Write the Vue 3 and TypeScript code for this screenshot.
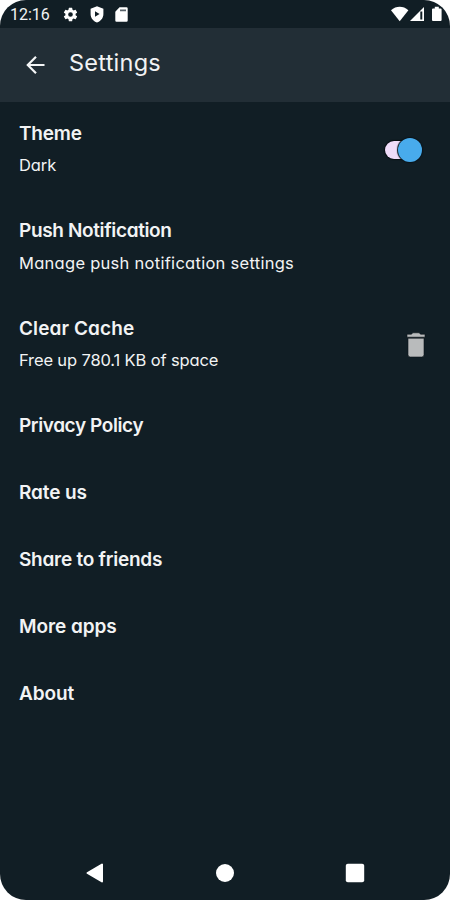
<script setup lang="ts">
import { ref } from 'vue'

interface Setting {
  title: string
  detail?: string
  control?: 'switch' | 'trash'
  spacing: number
  detailSpacing?: number
}

const dark = ref(true)

const settings: Setting[] = [
  { title: 'Theme', detail: 'Dark', control: 'switch', spacing: -0.2, detailSpacing: -0.1 },
  { title: 'Push Notification', detail: 'Manage push notification settings', spacing: -0.36, detailSpacing: 0.28 },
  { title: 'Clear Cache', detail: 'Free up 780.1 KB of space', control: 'trash', spacing: 0.1, detailSpacing: -0.14 },
  { title: 'Privacy Policy', spacing: -0.4 },
  { title: 'Rate us', spacing: -0.1 },
  { title: 'Share to friends', spacing: -0.25 },
  { title: 'More apps', spacing: -0.06 },
  { title: 'About', spacing: -0.1 },
]
</script>

<template>
  <div class="phone">
    <div class="status">
      <span class="clock">12:16</span>
      <svg class="gear" width="17" height="17" viewBox="0 0 24 24"><path fill="#fff" d="M19.14 12.94c.04-.3.06-.61.06-.94s-.02-.64-.07-.94l2.03-1.58a.49.49 0 0 0 .12-.61l-1.92-3.32a.49.49 0 0 0-.59-.22l-2.39.96a7 7 0 0 0-1.62-.94l-.36-2.54a.48.48 0 0 0-.48-.41h-3.84a.48.48 0 0 0-.47.41l-.36 2.54c-.59.24-1.13.57-1.62.94l-2.39-.96a.48.48 0 0 0-.59.22L2.74 8.87a.48.48 0 0 0 .12.61l2.03 1.58c-.05.3-.09.63-.09.94s.02.64.07.94l-2.03 1.58a.49.49 0 0 0-.12.61l1.92 3.32c.12.22.37.29.59.22l2.39-.96c.5.38 1.03.7 1.62.94l.36 2.54c.05.24.24.41.48.41h3.84c.24 0 .44-.17.47-.41l.36-2.54a7 7 0 0 0 1.62-.94l2.39.96c.22.08.47 0 .59-.22l1.92-3.32a.48.48 0 0 0-.12-.61zM12 15.3a3.3 3.3 0 1 1 0-6.600 3.300 3.300 0 0 1 0 6.600z" /></svg>
      <svg class="shield" width="14" height="17" viewBox="0 0 14 17"><path fill="#fff" fill-rule="evenodd" d="M7 .3 13.4 2.8V8c0 4-2.7 7.3-6.4 8.6C3.300 15.300.6 12 .6 8V2.800zM5 5.200v5.600L9.600 8z" /></svg>
      <svg class="card" width="13" height="15" viewBox="0 0 13 15"><path fill="#fff" d="M4.500.3h7A1.200 1.200 0 0 1 12.700 1.500v12a1.200 1.200 0 0 1-1.200 1.200h-10A1.200 1.200 0 0 1 .3 13.500V4.800z" /><path fill="#59636a" d="M5 2.400h6v1.800H5z" /></svg>
      <svg class="signals" width="54" height="18" viewBox="0 0 54 18">
        <path fill="#fff" d="M1 5.300C6.200.7 13.200.7 18.400 5.300L9.700 16.300z" />
        <path fill="#fff" d="M20 16 34 2v14z" /><path fill="#111e25" d="M30.300 6.500h2v8h-2z" />
        <path fill="#fff" d="M42 4.500q0-1 1-1h1.800V1.800h4v1.700h1.800q1 0 1 1V15q0 1-1 1H43q-1 0-1-1z" />
      </svg>
    </div>
    <header class="bar">
      <svg class="back" width="20" height="20" viewBox="0 0 20 20"><path d="M18.500 10H2M10 1.800 1.800 10l8.200 8.200" fill="none" stroke="#f3f5f6" stroke-width="2.200" /></svg>
      <h1>Settings</h1>
    </header>
    <main class="list">
      <section v-for="s in settings" :key="s.title" class="row">
        <div class="text">
          <div class="title"><span :style="{ letterSpacing: s.spacing + 'px' }">{{ s.title }}</span></div>
          <div v-if="s.detail" class="detail"><span :style="{ letterSpacing: s.detailSpacing + 'px' }">{{ s.detail }}</span></div>
        </div>
        <button v-if="s.control === 'switch'" class="switch" :class="{ on: dark }" aria-label="Theme" @click="dark = !dark"><i></i></button>
        <svg v-if="s.control === 'trash'" class="trash" width="20" height="26" viewBox="0 0 20 26"><path fill="#b9bbbc" stroke="#0a1217" stroke-width=".6" d="M1 2.200h4.500L6.800.8h6.400l1.300 1.400H19v3H1zM2 6.200h16v16.500q0 2.300-2.300 2.300H4.300Q2 25 2 22.700z" /></svg>
      </section>
    </main>
    <nav class="nav">
      <svg width="18" height="22" viewBox="0 0 18 22"><path fill="#fff" stroke="#fff" stroke-width="2" stroke-linejoin="round" d="M1.500 11 16 2.500v17z" /></svg>
      <svg width="20" height="20" viewBox="0 0 20 20"><circle cx="10" cy="10" r="9" fill="#fff" /></svg>
      <svg width="20" height="20" viewBox="0 0 20 20"><rect x=".8" y=".8" width="18.400" height="18.400" rx="2" fill="#fff" /></svg>
    </nav>
  </div>
</template>

<style>
body { background: #fff; }
</style>

<style scoped>
.phone {
  display: flex;
  flex-direction: column;
  box-sizing: border-box;
  width: 450px;
  height: 900px;
  overflow: hidden;
  border-radius: 26px;
  background: #111e25;
  color: #f2f3f4;
  font-family: Inter, "Open Sans", sans-serif;
  font-feature-settings: "cv11", "ss03";
}
.status { display: flex; align-items: center; height: 28px; padding: 0 6px 0 10px; box-sizing: border-box; }
.clock { width: 52px; padding-top: 2px; font: 400 16px/28px Roboto, sans-serif; white-space: nowrap; }
.shield { margin-left: 10.500px; }
.card { margin-left: 11px; }
.signals { margin-left: auto; }
.bar { display: flex; align-items: center; height: 73.500px; padding-left: 25.500px; box-sizing: border-box; background: #222e36; }
.back { margin-top: 0; }
h1 { margin: -4px 0 0 23.500px; font-size: 23.500px; font-weight: 400; line-height: 32px; letter-spacing: .25px; }
.list { flex: 1; }
.row { display: flex; align-items: center; justify-content: space-between; padding: 18px 24px 22px 19px; }
.title { font-size: 19px; font-weight: 600; line-height: 27px; white-space: nowrap; }
.detail { padding-top: 6.500px; font-size: 16.500px; line-height: 24px; white-space: nowrap; }
.switch { position: relative; width: 37px; height: 24px; margin: 4px 4px 0 0; padding: 0; border: 0; background: none; }
.switch::before { content: ""; position: absolute; left: 0; top: 3px; width: 34px; height: 18px; border-radius: 9px; background: #efdcf9; box-shadow: 0 0 1px 1px #070d11; }
.switch i { position: absolute; left: 0; top: 0; width: 24px; height: 24px; border-radius: 50%; background: #48abec; box-shadow: 0 0 1px 1px #0a151c; }
.switch.on i { left: 13px; }
.trash { margin-top: 4px; }
.nav { display: flex; align-items: center; justify-content: space-between; height: 54px; padding: 0 85px 0 86px; }
</style>
